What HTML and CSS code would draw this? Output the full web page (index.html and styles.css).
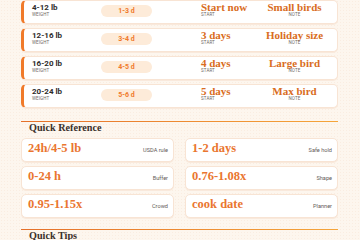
FILE: index.html
```html
<!DOCTYPE html>
<html lang="en">
<head>
<meta charset="utf-8">
<title>Thaw Planner</title>
<link rel="stylesheet" href="styles.css">
</head>
<body>
<div class="page">
  <div class="rows">
    <div class="row">
      <div class="cell"><div class="weight">4-12 lb</div><div class="lbl">WEIGHT</div></div>
      <div class="pill">1-3 d</div>
      <div class="cell"><div class="big">Start now</div><div class="lbl">START</div></div>
      <div class="cell note"><div class="big">Small birds</div><div class="lbl">NOTE</div></div>
    </div>
    <div class="row">
      <div class="cell"><div class="weight">12-16 lb</div><div class="lbl">WEIGHT</div></div>
      <div class="pill">3-4 d</div>
      <div class="cell"><div class="big">3 days</div><div class="lbl">START</div></div>
      <div class="cell note"><div class="big">Holiday size</div><div class="lbl">NOTE</div></div>
    </div>
    <div class="row">
      <div class="cell"><div class="weight">16-20 lb</div><div class="lbl">WEIGHT</div></div>
      <div class="pill">4-5 d</div>
      <div class="cell"><div class="big">4 days</div><div class="lbl">START</div></div>
      <div class="cell note"><div class="big">Large bird</div><div class="lbl">NOTE</div></div>
    </div>
    <div class="row">
      <div class="cell"><div class="weight">20-24 lb</div><div class="lbl">WEIGHT</div></div>
      <div class="pill">5-6 d</div>
      <div class="cell"><div class="big">5 days</div><div class="lbl">START</div></div>
      <div class="cell note"><div class="big">Max bird</div><div class="lbl">NOTE</div></div>
    </div>
  </div>

  <section class="section">
    <h2 class="heading">Quick Reference</h2>
    <div class="grid">
      <div class="card"><span class="value">24h/4-5 lb</span><span class="cap">USDA rule</span></div>
      <div class="card"><span class="value">1-2 days</span><span class="cap">Safe hold</span></div>
      <div class="card"><span class="value">0-24 h</span><span class="cap">Buffer</span></div>
      <div class="card"><span class="value">0.76-1.08x</span><span class="cap">Shape</span></div>
      <div class="card"><span class="value">0.95-1.15x</span><span class="cap">Crowd</span></div>
      <div class="card"><span class="value">cook date</span><span class="cap">Planner</span></div>
    </div>
  </section>

  <section class="section tips">
    <h2 class="heading">Quick Tips</h2>
  </section>
</div>
</body>
</html>
```

FILE: styles.css
```css
html, body {
  margin: 0;
  padding: 0;
}
body {
  width: 360px;
  height: 240px;
  overflow: hidden;
  background-color: #fdf6ee;
  background-image: radial-gradient(rgba(232, 160, 110, 0.10) 0.6px, transparent 0.9px);
  background-size: 3px 3px;
  font-family: Roboto, "Liberation Sans", Arial, sans-serif;
}
.page {
  width: 317px;
  margin-left: 21px;
}
.rows {
  display: flex;
  flex-direction: column;
  gap: 4px;
}
.row {
  display: grid;
  grid-template-columns: 69px 100px 59px 1fr;
  align-items: end;
  box-sizing: border-box;
  height: 24px;
  padding: 0 8px 5px 8px;
  background: #fff;
  border: 1px solid #f8e4d4;
  border-left: 3px solid #f07a2a;
  border-radius: 5px;
  box-shadow: 0 1px 0 #f9e9dc;
}
.cell {
  display: flex;
  flex-direction: column;
}
.note {
  align-items: center;
  text-align: center;
}
.weight {
  font-size: 8px;
  line-height: 8px;
  font-weight: 700;
  color: #2e2b2a;
}
.lbl {
  font-size: 4.5px;
  line-height: 6px;
  color: #6f6a66;
  letter-spacing: 0.1px;
}
.big {
  font-family: "Liberation Serif", "Times New Roman", serif;
  font-weight: 700;
  font-size: 11px;
  line-height: 10px;
  color: #d96c22;
  white-space: nowrap;
}
.pill {
  width: 51px;
  height: 12px;
  margin-bottom: 1px;
  border-radius: 6px;
  background: #fdebd9;
  color: #f07a2a;
  font-size: 7px;
  font-weight: 700;
  line-height: 12px;
  text-align: center;
}
.section {
  margin-top: 13px;
}
.tips {
  margin-top: 11px;
}
.heading {
  margin: 0;
  padding: 0 0 0 8px;
  border-top: 1px solid #e8762a;
  border-image: linear-gradient(90deg, #e5702a, #f5a53a) 1;
  font-family: "Liberation Serif", "Times New Roman", serif;
  font-weight: 700;
  font-size: 10.2px;
  line-height: 12px;
  color: #3a302b;
}
.grid {
  margin-top: 4px;
  display: grid;
  grid-template-columns: 1fr 1fr;
  gap: 4px 11px;
}
.card {
  display: flex;
  justify-content: space-between;
  align-items: baseline;
  box-sizing: border-box;
  height: 24px;
  padding: 3px 5px 0 6px;
  background: #fff;
  border: 1px solid #f8e4d4;
  border-radius: 5px;
  box-shadow: 0 1px 0 #f9e9dc;
}
.value {
  font-family: "Liberation Serif", "Times New Roman", serif;
  font-weight: 700;
  font-size: 12.5px;
  line-height: 13px;
  color: #ea7630;
}
.cap {
  font-size: 5.6px;
  line-height: 6px;
  color: #5f5a57;
}
```
